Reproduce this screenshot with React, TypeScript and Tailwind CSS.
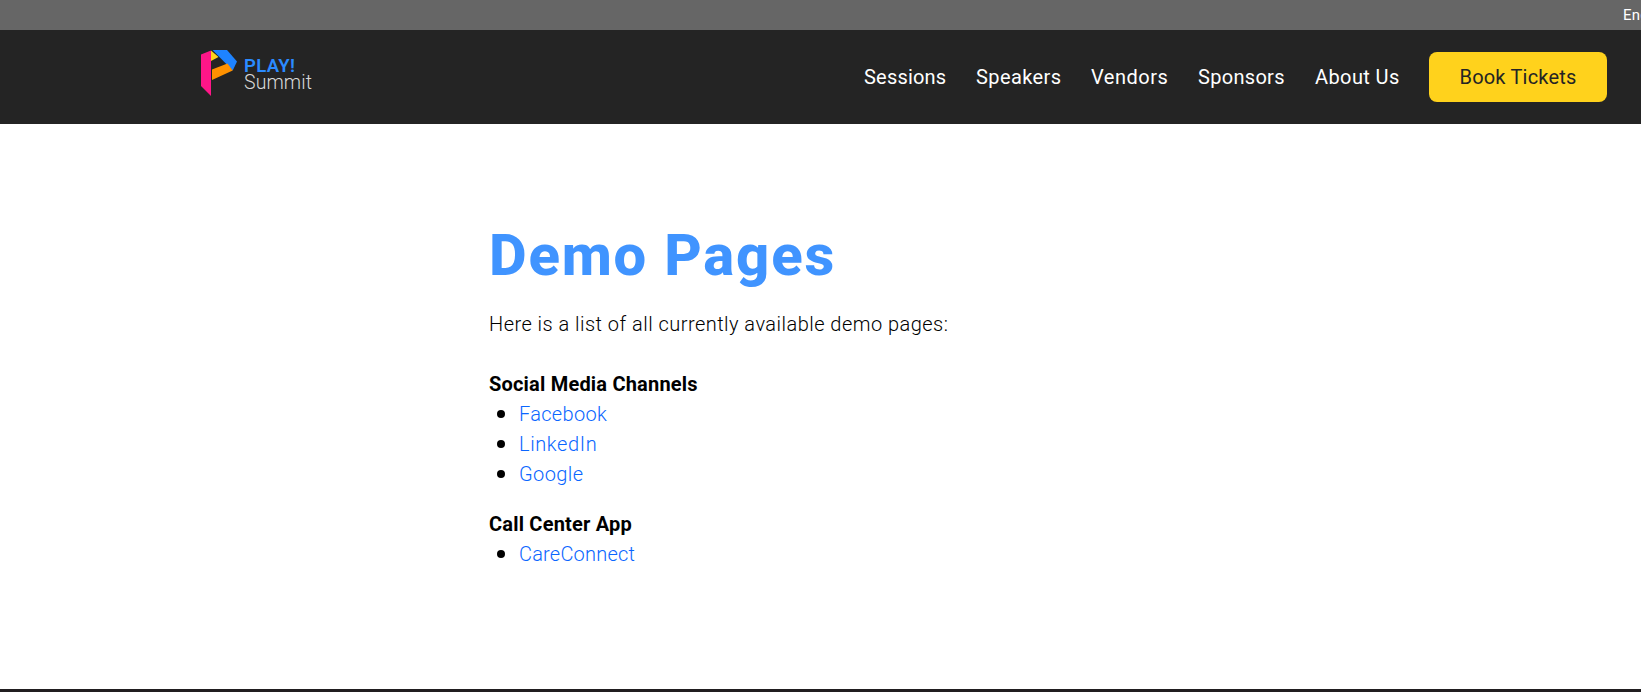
import React from "react";

const navItems = [
  { label: "Sessions", box: "w-[82px]", tracking: "tracking-[0.2px]" },
  { label: "Speakers", box: "w-[85px]", tracking: "tracking-[0.4px]" },
  { label: "Vendors", box: "w-[77px]", tracking: "tracking-[0.5px]" },
  { label: "Sponsors", box: "w-[87px]", tracking: "tracking-[0.3px]" },
  { label: "About Us", box: "w-[84px]", tracking: "tracking-[0.4px]" },
];

const socialLinks = [
  { label: "Facebook", tracking: "tracking-[0.3px]" },
  { label: "LinkedIn", tracking: "tracking-[0.6px]" },
  { label: "Google", tracking: "tracking-[0.4px]" },
];

const callCenterLinks = [{ label: "CareConnect", tracking: "tracking-[0.2px]" }];

function Logo() {
  return (
    <a href="#" className="flex h-[54px] w-[120px] items-start" aria-label="PLAY! Summit">
      <svg width="120" height="50" viewBox="0 0 120 50">
        <polygon points="0,4.5 10,0.5 10,46 0,36" fill="#ff1688" />
        <polygon points="10,0.5 17.5,7 10,11" fill="#ffd21c" />
        <polygon points="11.5,0 26,0 36,11.5 31.7,20.5" fill="#1e83ff" />
        <polygon points="11,19.5 26.5,13.5 31.7,20.5 11,30" fill="#ff9100" />
        <text x="43" y="21.5" fontFamily="Roboto, sans-serif" fontWeight="600" fontSize="18.5" fill="#2b8bff" textLength="51">PLAY!</text>
        <text x="43" y="39" fontFamily="Roboto, sans-serif" fontWeight="300" fontSize="19.5" fill="#d8d8d8" textLength="68">Summit</text>
      </svg>
    </a>
  );
}

function LinkList({ links }: { links: { label: string; tracking: string }[] }) {
  return (
    <ul className="font-light">
      {links.map((link) => (
        <li key={link.label} className="flex items-center pl-[8px]">
          <span className="mr-[14px] size-[8px] rounded-full bg-black" />
          <a href="#" className={`text-[#0a66ff] ${link.tracking}`}>
            {link.label}
          </a>
        </li>
      ))}
    </ul>
  );
}

export default function App() {
  return (
    <div className="h-[692px] w-full overflow-hidden bg-white font-['Roboto',sans-serif] text-[20px] leading-[30px] text-black">
      <div className="flex h-[30px] items-center justify-end overflow-hidden bg-[#666] text-white">
        <span className="w-[18px] whitespace-nowrap text-[15px] tracking-[0.2px]">English</span>
      </div>
      <header className="flex h-[94px] items-center justify-between bg-[#242424] pl-[201px] pr-[34px]">
        <Logo />
        <nav className="flex items-center gap-[30px] text-white">
          {navItems.map((item) => (
            <a key={item.label} href="#" className={`whitespace-nowrap ${item.box} ${item.tracking}`}>
              {item.label}
            </a>
          ))}
          <a href="#" className="flex h-[50px] w-[178px] items-center justify-center rounded-[8px] bg-[#ffd21c] tracking-[0.2px] text-[#242424]">
            Book Tickets
          </a>
        </nav>
      </header>
      <main className="h-[565px] pl-[489px] pt-[95px]">
        <h1 className="text-[58px] font-extrabold leading-[72px] tracking-[1.8px] text-[#4094ff]">Demo Pages</h1>
        <p className="mt-[18px] font-light tracking-[0.47px]">Here is a list of all currently available demo pages:</p>
        <h2 className="mt-[30px] font-bold tracking-[0.2px]">Social Media Channels</h2>
        <LinkList links={socialLinks} />
        <h2 className="mt-[20px] font-bold tracking-[0.2px]">Call Center App</h2>
        <LinkList links={callCenterLinks} />
      </main>
      <footer className="h-[3px] bg-[#211e20]" />
    </div>
  );
}
